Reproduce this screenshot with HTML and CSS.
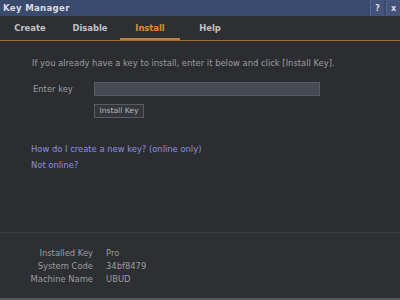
FILE: index.html
```html
<!DOCTYPE html>
<html>
<head>
<meta charset="utf-8">
<link rel="stylesheet" href="styles.css">
</head>
<body>
<div class="window">
  <div class="titlebar">
    <span class="title">Key Manager</span>
    <div class="tbtns">
      <span class="tbtn">?</span>
      <span class="tbtn">x</span>
    </div>
  </div>
  <div class="tabs">
    <span class="tab">Create</span>
    <span class="tab">Disable</span>
    <span class="tab active">Install</span>
    <span class="tab">Help</span>
  </div>
  <div class="content">
    <p class="intro">If you already have a key to install, enter it below and click [Install Key].</p>
    <div class="keyrow">
      <span class="label">Enter key</span>
      <div class="input"></div>
    </div>
    <div class="btnrow"><span class="button">Install Key</span></div>
    <div class="links">
      <a class="link">How do I create a new key? (online only)</a>
      <a class="link">Not online?</a>
    </div>
  </div>
  <div class="footer">
    <span class="fl">Installed Key</span><span class="fv">Pro</span>
    <span class="fl">System Code</span><span class="fv">34bf8479</span>
    <span class="fl">Machine Name</span><span class="fv">UBUD</span>
  </div>
</div>
</body>
</html>
```
FILE: styles.css
```css
html, body { margin: 0; padding: 0; }
body { width: 400px; height: 300px; overflow: hidden; background: #2c2d31; font-family: "DejaVu Sans", sans-serif; font-size: 8.4px; color: #9b9ca0; }
.window { width: 400px; height: 300px; display: flex; flex-direction: column; box-sizing: border-box; border-bottom: 2px solid #55575c; }
.titlebar { height: 16px; background: #3a4a6c; display: flex; align-items: center; justify-content: space-between; padding-left: 3px; }
.title { font-weight: bold; font-size: 8.6px; color: #d9dce4; letter-spacing: 0.3px; }
.tbtns { display: flex; gap: 2px; height: 100%; }
.tbtn { width: 14px; height: 16px; background: #43537a; color: #d9dce4; font-weight: bold; font-size: 8px; display: flex; align-items: center; justify-content: center; border-left: 1px solid #566690; box-sizing: border-box; }
.tabs { height: 25px; display: flex; border-bottom: 1px solid #a8692e; box-sizing: border-box; background: #2e2f33; }
.tab { width: 60px; display: flex; align-items: center; justify-content: center; font-weight: bold; font-size: 8.4px; color: #c2c3c7; padding-top: 2px; box-sizing: border-box; border-bottom: 2px solid transparent; }
.tab.active { color: #e1883a; border-bottom-color: #c57d3d; }
.content { flex: 1; padding: 0 31px; }
.intro { margin: 17px 0 0 1px; }
.keyrow { display: flex; align-items: center; margin-top: 14px; }
.label { width: 61px; padding-left: 2px; }
.input { width: 224px; height: 12px; background: #464a53; border: 1px solid #575b63; }
.btnrow { padding-left: 63px; margin-top: 8px; }
.button { display: inline-block; width: 48px; height: 12px; line-height: 12px; text-align: center; font-size: 7.6px; color: #b5b7bc; background: #34363b; border: 1px solid #5a5c61; }
.links { display: flex; flex-direction: column; gap: 6px; margin-top: 26px; }
.link { color: #8b8fe0; }
.footer { height: 66px; background: #2e2f33; border-top: 1px solid #3a3b40; display: grid; grid-template-columns: 93px auto; column-gap: 13px; row-gap: 3px; align-content: start; padding-top: 15px; box-sizing: border-box; }
.fl { text-align: right; }
```
